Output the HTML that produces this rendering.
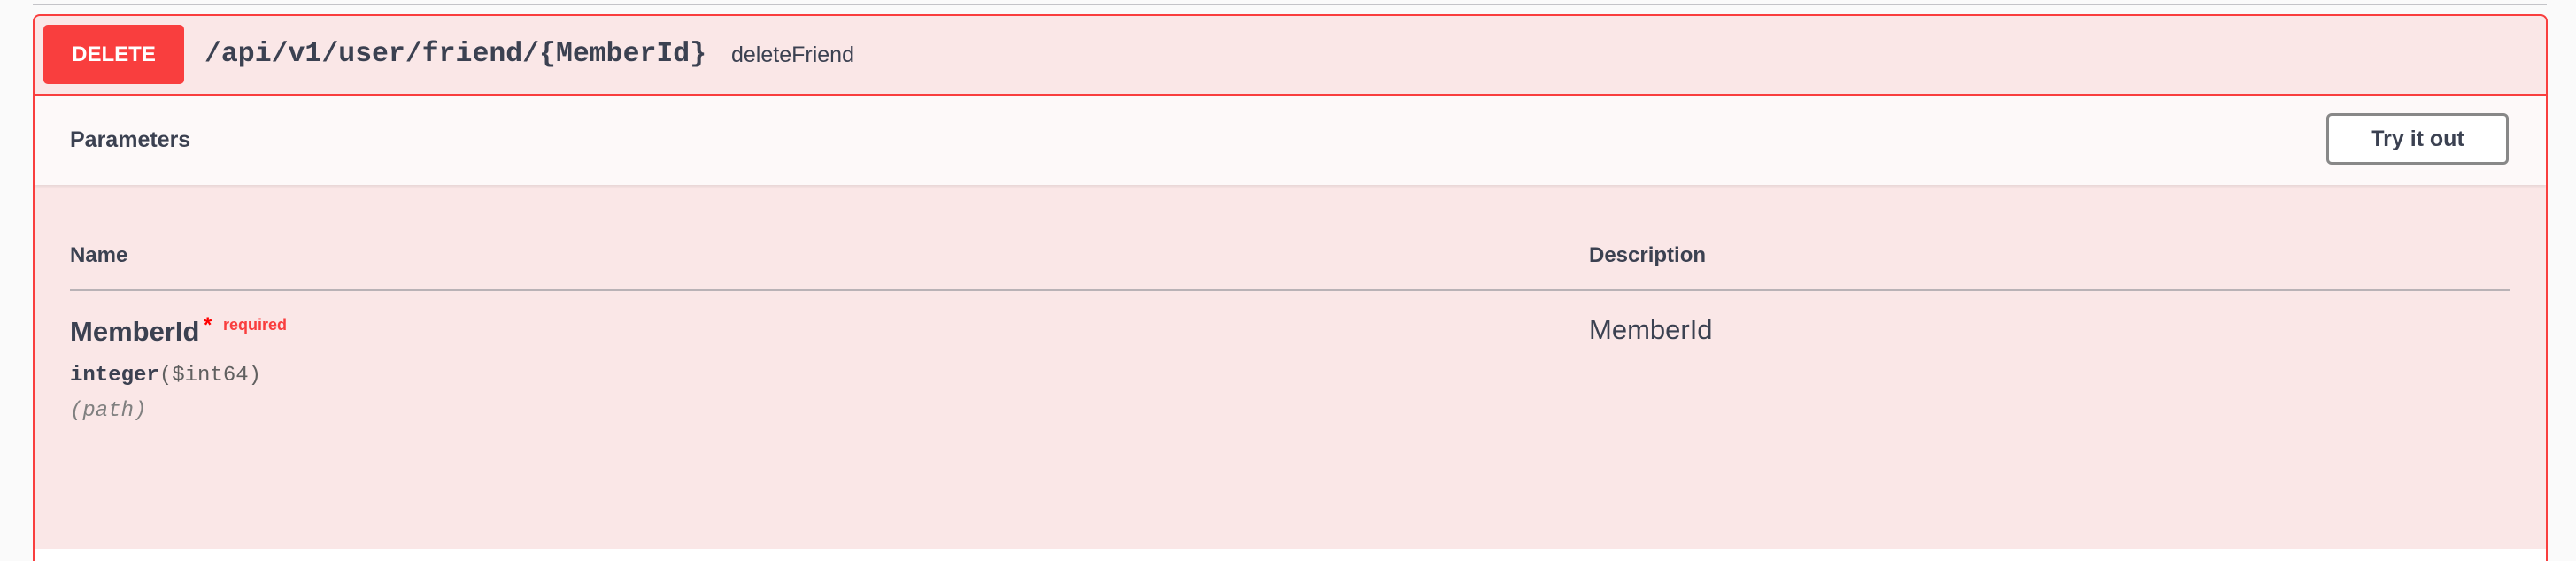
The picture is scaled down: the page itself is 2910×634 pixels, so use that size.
<!DOCTYPE html>
<html><head><meta charset="utf-8"><style>
*{margin:0;padding:0;box-sizing:border-box}
html,body{width:2910px;height:634px;overflow:hidden}
body{background:#fafafa;position:relative;font-family:"Liberation Sans",sans-serif;color:#3b4151}
.abs{position:absolute;white-space:nowrap}
.topline{position:absolute;left:37px;top:4px;width:2840px;height:2px;background:#c4c4c8}
.box{position:absolute;left:37px;top:16px;width:2841px;height:630px;border:2px solid #f93e3e;border-bottom:none;border-radius:8px 8px 0 0;background:#fae7e7;overflow:hidden}
.hdrb{position:absolute;left:0;top:88px;width:100%;height:2px;background:#f93e3e}
.params{position:absolute;left:0;top:90px;width:100%;height:101px;background:#fdf9f9;box-shadow:0 2px 3px rgba(0,0,0,.08)}
.del{position:absolute;left:49px;top:28px;width:159px;height:67px;background:#f93e3e;border-radius:5px;color:#fff;font-weight:bold;font-size:24px;text-align:center;line-height:67px}
.btn{position:absolute;left:2628px;top:128px;width:206px;height:58px;border:3px solid #888;border-radius:6px;background:#fff;font-weight:bold;font-size:25px;text-align:center;line-height:52px;color:#3b4151}
.white{position:absolute;left:39px;top:620px;width:2837px;height:20px;background:#fff}
</style></head><body>
<div class="topline"></div>
<div class="box">
  <div class="hdrb"></div>
  <div class="params"></div>
</div>
<div class="white"></div>
<div class="del">DELETE</div>
<div class="abs" style="left:231px;top:40px;font-family:'Liberation Mono',monospace;font-size:31.5px;line-height:44px;font-weight:bold;color:#3b4151">/api/v1/user/friend/{MemberId}</div>
<div class="abs" style="left:826px;top:47px;font-size:25px;line-height:30px;color:#3b4151">deleteFriend</div>
<div class="abs" style="left:79px;top:143px;font-size:25px;font-weight:bold;line-height:30px">Parameters</div>
<div class="btn">Try it out</div>
<div class="abs" style="left:79px;top:274px;font-size:24px;font-weight:bold;line-height:30px">Name</div>
<div class="abs" style="left:1795px;top:274px;font-size:24px;font-weight:bold;line-height:30px">Description</div>
<div class="abs" style="left:79px;top:327px;width:2756px;height:2px;background:#b9b2b6"></div>
<div class="abs" style="left:79px;top:356px;font-size:31px;font-weight:bold;line-height:38px">MemberId</div>
<div class="abs" style="left:230px;top:356px;font-size:24px;font-weight:bold;color:#f00;line-height:24px">*</div>
<div class="abs" style="left:252px;top:356px;font-size:18px;font-weight:bold;color:#f93e3e;line-height:22px">required</div>
<div class="abs" style="left:79px;top:410px;font-family:'Liberation Mono',monospace;font-size:24px;line-height:30px"><b>integer</b><span style="color:#606060">($int64)</span></div>
<div class="abs" style="left:79px;top:450px;font-family:'Liberation Mono',monospace;font-size:24px;font-style:italic;color:#808080;line-height:30px">(path)</div>
<div class="abs" style="left:1795px;top:354px;font-size:31px;line-height:38px">MemberId</div>
</body></html>
